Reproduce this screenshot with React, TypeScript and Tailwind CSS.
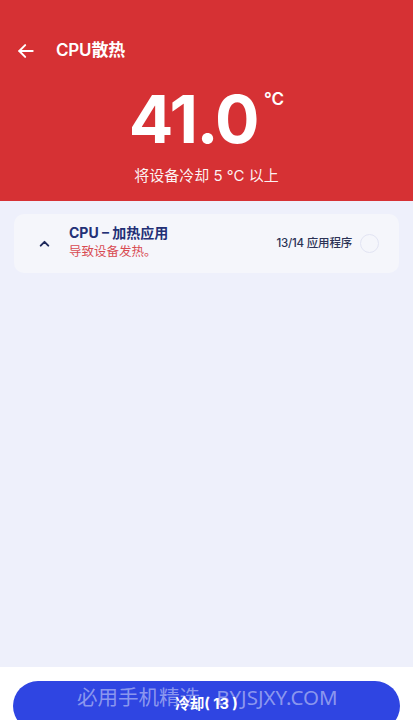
import React from "react";

export default function App() {
  const font = { fontFamily: 'Inter, "Noto Sans CJK SC", sans-serif' };
  return (
    <div className="relative w-[413px] h-[720px] flex flex-col overflow-hidden bg-white" style={font}>
      <div className="h-[201px] bg-[#d63134] flex flex-col text-white">
        <div className="h-[30px]" />
        <div className="flex items-center h-[42px] pl-[16px]">
          <svg width="20" height="20" viewBox="0 0 24 24" fill="none" stroke="white" strokeWidth="2.4" strokeLinecap="round" strokeLinejoin="round">
            <path d="M20 12H4" />
            <path d="M11 5l-7 7 7 7" />
          </svg>
          <span className="ml-[20px] text-[17px] font-semibold tracking-[-0.2px]">CPU散热</span>
        </div>
        <div className="flex justify-center mt-[12px] h-[70px]">
          <div className="relative flex items-start">
            <span className="text-[66px] leading-[70px] font-bold tracking-[-1.5px]">41.0</span>
            <span className="text-[17px] leading-[20px] font-semibold ml-[6px] mt-[5px]">°C</span>
          </div>
        </div>
        <div className="text-center text-[15px] leading-[20px] mt-[12px] text-white/95">将设备冷却 5 °C 以上</div>
      </div>
      <div className="flex-1 bg-[#eef0fb] px-[14px] pt-[13px]">
        <div className="h-[59px] rounded-[10px] bg-[#f5f6fb] flex items-center pl-[24px] pr-[20px]">
          <svg width="13" height="13" viewBox="0 0 24 24" fill="none" stroke="#1f2a5c" strokeWidth="3.6" strokeLinecap="round" strokeLinejoin="round">
            <path d="M5 16l7-7 7 7" />
          </svg>
          <div className="ml-[18px] flex flex-col -mt-[2px]">
            <span className="text-[14px] leading-[18px] font-bold text-[#233076]">CPU – 加热应用</span>
            <span className="text-[12.5px] leading-[18px] text-[#d84a52] mt-[1px]">导致设备发热。</span>
          </div>
          <div className="flex-1" />
          <span className="text-[11.5px] font-medium text-[#2c3356] tracking-[-0.2px]">13/14 应用程序</span>
          <div className="ml-[8px] w-[19px] h-[19px] rounded-full border-[1.5px] border-[#e2e4f3]" />
        </div>
      </div>
      <div className="h-[53px] bg-white px-[13px] pt-[14px]">
        <div className="h-[50px] rounded-full bg-[#2f45e2] flex justify-center pt-[12px]">
          <span className="text-white text-[14.5px] font-bold">冷却( 13 )</span>
        </div>
      </div>
      <div
        className="absolute left-[77px] top-[683px] text-[20.5px] leading-[28px] text-white/45 whitespace-nowrap"
        style={{ fontFamily: '"Noto Sans", "Noto Sans CJK SC", sans-serif' }}
      >
        必用手机精选 · BYJSJXY.COM
      </div>
    </div>
  );
}
